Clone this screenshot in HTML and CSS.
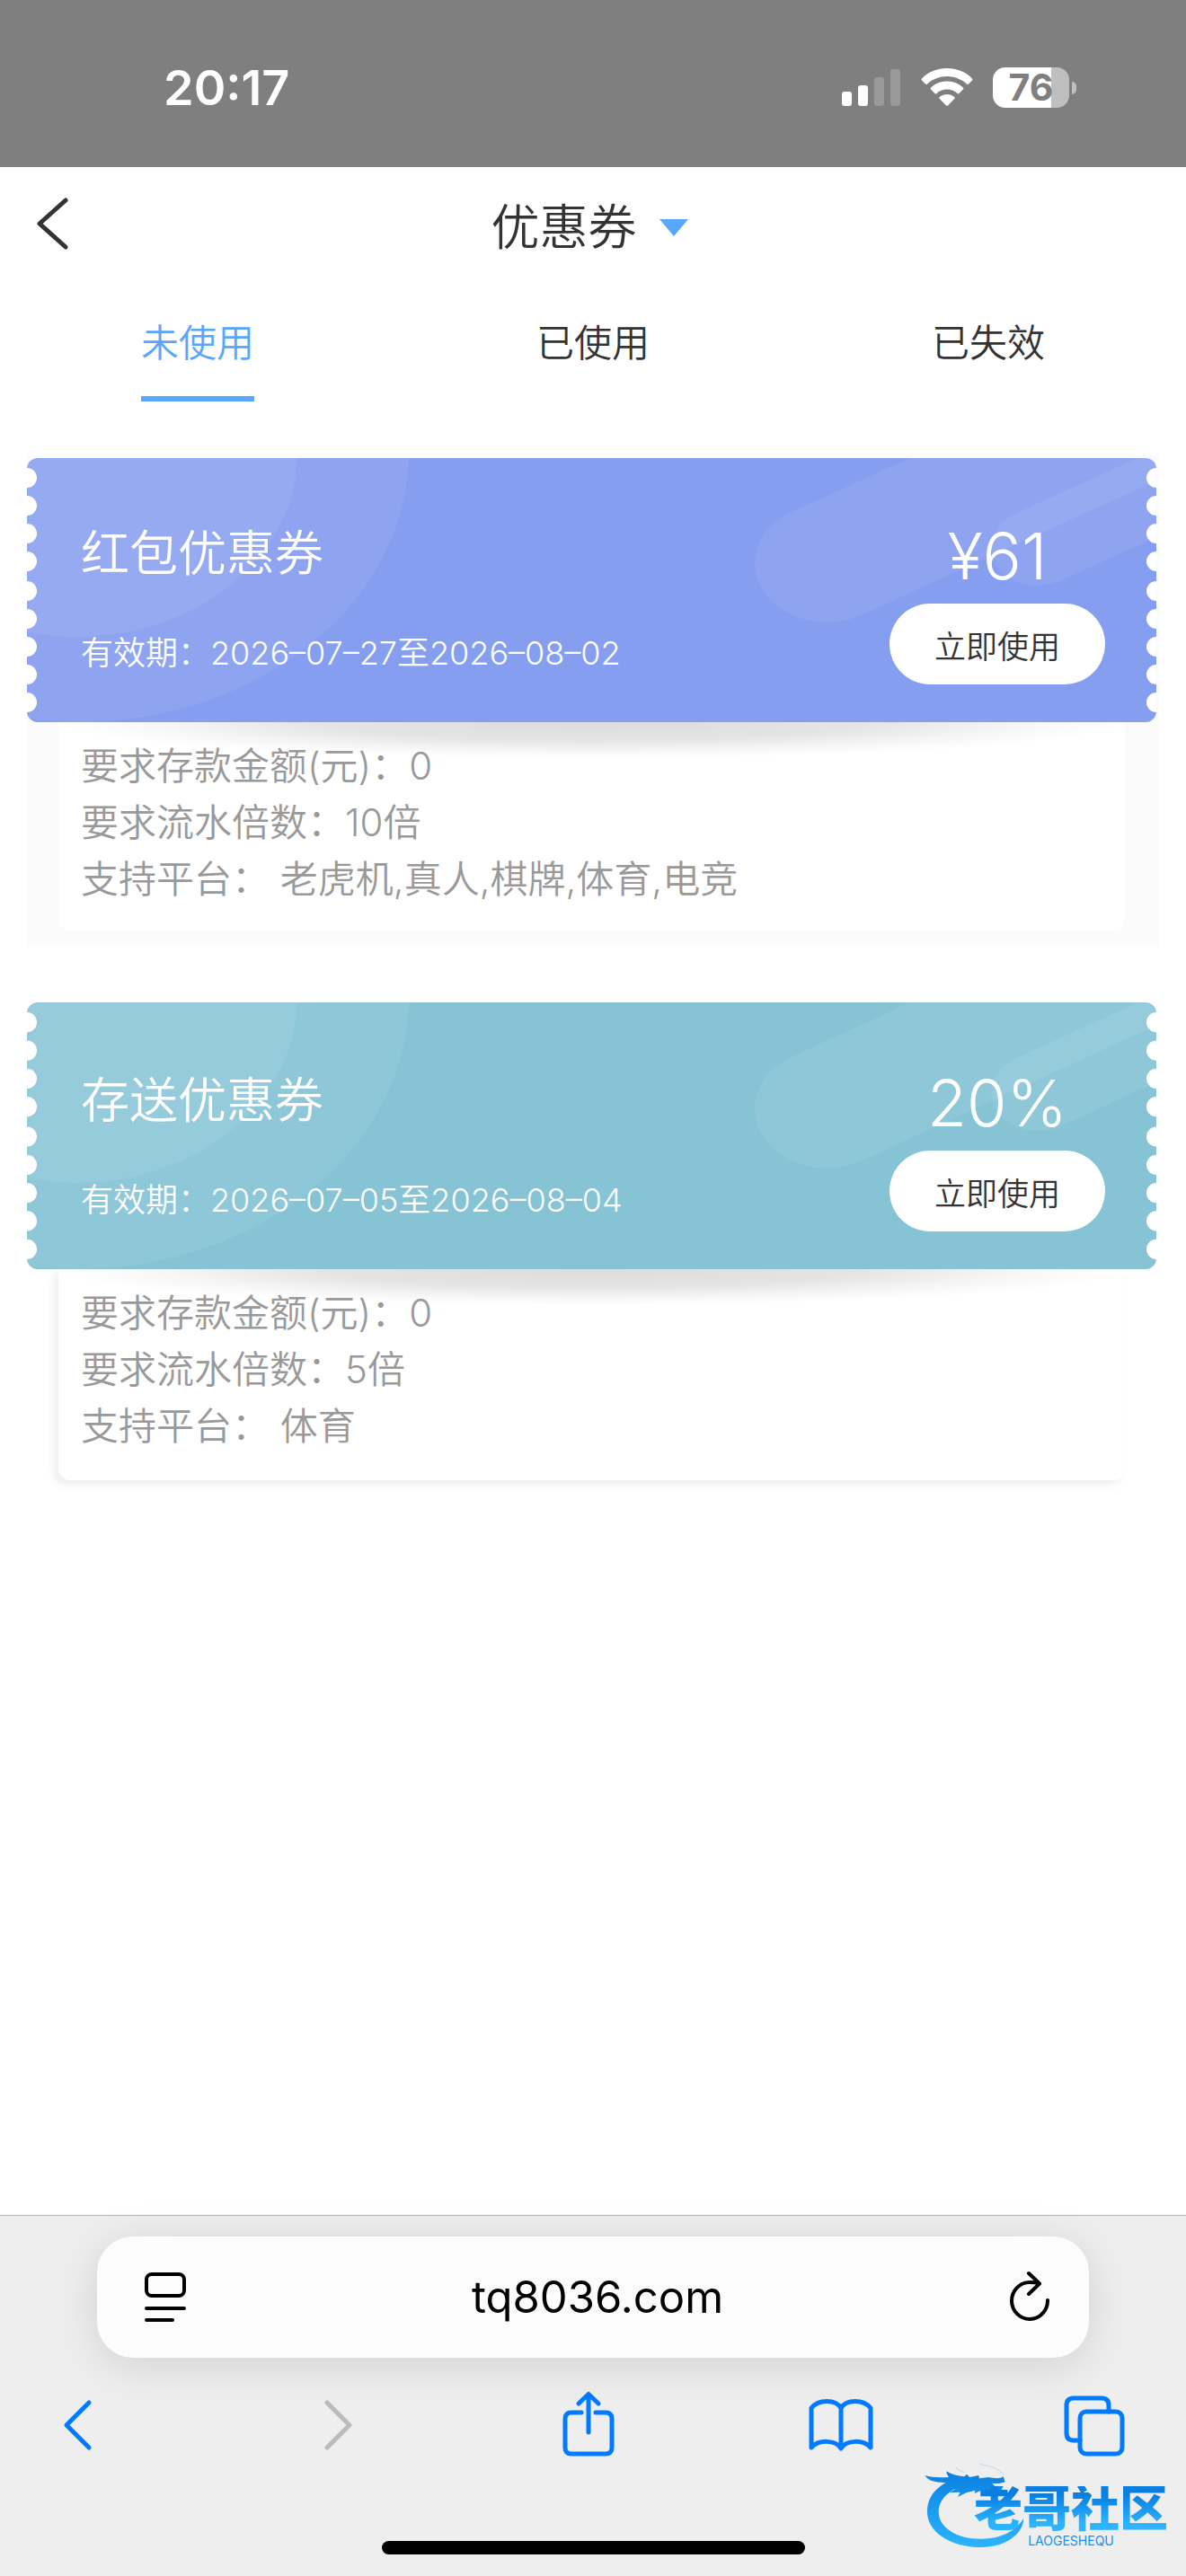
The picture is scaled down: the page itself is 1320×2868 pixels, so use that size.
FILE: index.html
```html
<!doctype html>
<html lang="zh-CN">
<head>
	<meta charset="utf-8">
	<meta name="viewport" content="width=device-width, initial-scale=1">
	<title>优惠券</title>
	<link rel="stylesheet" href="styles.css">
</head>
<body>

<!-- shared ticket background, coloured through currentColor -->
<svg class="defs" width="0" height="0" aria-hidden="true">
	<symbol id="ticket" viewBox="0 0 1257 294" preserveAspectRatio="none">
		<clipPath id="ticket-clip"><rect width="1257" height="294" rx="12"/></clipPath>
		<g clip-path="url(#ticket-clip)">
			<rect width="1257" height="294" fill="currentColor"/>
			<g fill="#fff" fill-opacity=".07">
				<ellipse cx="56" cy="-6" rx="369" ry="300"/>
				<ellipse cx="56" cy="-5" rx="245" ry="204"/>
			</g>
			<g stroke="#fff" stroke-opacity=".07" stroke-linecap="round" transform="scale(1 .82)">
				<path stroke-width="160" d="M890 143l600-333"/>
				<path stroke-width="104" d="M1125 121l400-222"/>
			</g>
			<g class="holes">
				<circle cx="0" cy="22" r="11"/><circle cx="0" cy="53" r="11"/><circle cx="0" cy="84" r="11"/>
				<circle cx="0" cy="115" r="11"/><circle cx="0" cy="148" r="11"/><circle cx="0" cy="179" r="11"/>
				<circle cx="0" cy="210" r="11"/><circle cx="0" cy="241" r="11"/><circle cx="0" cy="272" r="11"/>
				<circle cx="1257" cy="22" r="11"/><circle cx="1257" cy="53" r="11"/><circle cx="1257" cy="84" r="11"/>
				<circle cx="1257" cy="115" r="11"/><circle cx="1257" cy="148" r="11"/><circle cx="1257" cy="179" r="11"/>
				<circle cx="1257" cy="210" r="11"/><circle cx="1257" cy="241" r="11"/><circle cx="1257" cy="272" r="11"/>
			</g>
		</g>
	</symbol>
</svg>

<div class="status-bar">
	<span class="time">20:17</span>
	<div class="status-icons">
		<svg width="65" height="42" viewBox="0 0 65 42" fill="#fff">
			<rect x="0" y="26" width="11" height="16" rx="3"/>
			<rect x="18" y="19" width="11" height="23" rx="3"/>
			<rect x="36" y="10" width="11" height="32" rx="3" fill="#999"/>
			<rect x="54" y="1" width="11" height="41" rx="3" fill="#999"/>
		</svg>
		<svg class="wifi" width="58" height="42" viewBox="0 0 58 42" fill="#fff">
			<path d="M29 0C18 0 8 4 1 11.500q-1 1 0 2l4 4q1 1 2 0C13 12 21 9 29 9s16 3 22 8.500q1 1 2 0l4-4q1-1 0-2C50 4 40 0 29 0z"/>
			<path d="M29 14.500c-7 0-13 2.500-18 7q-1 1 0 2l4.500 4.500q1 1 2 0c3-3 7-4.500 11.500-4.500s8.500 1.500 11.500 4.500q1 1 2 0l4.500-4.500q1-1 0-2c-5-4.500-11-7-18-7z"/>
			<path d="M29 29c-3 0-6 1-8.200 3q-1 1 0 2l7 7.300q1.200 1 2.400 0l7-7.300q1-1 0-2C35 30 32 29 29 29z"/>
		</svg>
		<span class="battery">76</span>
	</div>
</div>

<header class="header">
	<button class="back" aria-label="返回">
		<svg width="38" height="60" viewBox="0 0 38 60" fill="none" stroke="#333" stroke-width="5" stroke-linecap="round" stroke-linejoin="round"><path d="M35 4L6 30l29 26"/></svg>
	</button>
	<button class="title">优惠券<span class="arrow"></span></button>
</header>

<nav class="tabs">
	<a href="#unused" class="active">未使用</a>
	<a href="#used">已使用</a>
	<a href="#expired">已失效</a>
</nav>

<main class="coupons">
	<section class="coupon red-packet">
		<div class="ticket">
			<svg class="ticket-bg"><use href="#ticket"/></svg>
			<div class="ticket-info">
				<h2>红包优惠券</h2>
				<p>有效期：2026–07–27至2026–08–02</p>
			</div>
			<div class="ticket-action">
				<strong>¥61</strong>
				<button>立即使用</button>
			</div>
		</div>
		<div class="rules">
			<p>要求存款金额(元)：0</p>
			<p>要求流水倍数：10倍</p>
			<p>支持平台： 老虎机,真人,棋牌,体育,电竞</p>
		</div>
	</section>

	<section class="coupon deposit">
		<div class="ticket">
			<svg class="ticket-bg"><use href="#ticket"/></svg>
			<div class="ticket-info">
				<h2>存送优惠券</h2>
				<p>有效期：2026–07–05至2026–08–04</p>
			</div>
			<div class="ticket-action">
				<strong>20%</strong>
				<button>立即使用</button>
			</div>
		</div>
		<div class="rules">
			<p>要求存款金额(元)：0</p>
			<p>要求流水倍数：5倍</p>
			<p>支持平台： 体育</p>
		</div>
	</section>
</main>

<footer class="browser">
	<div class="address">
		<button aria-label="页面设置">
			<svg width="46" height="56" viewBox="0 0 46 56" fill="none" stroke="#000" stroke-width="4" stroke-linecap="round"><rect x="2" y="2" width="42" height="24" rx="6"/><path d="M2 40h42M2 53h29"/></svg>
		</button>
		<input type="text" value="tq8036.com" aria-label="网址">
		<button aria-label="刷新">
			<svg width="46" height="62" viewBox="0 0 46 62" fill="none" stroke="#000" stroke-width="4" stroke-linecap="round" stroke-linejoin="round"><path d="M43 34A20 20.500 0 1 1 23 14q6 0 10 1M22 4l12 11.500L22 27"/></svg>
		</button>
	</div>
	<div class="toolbar">
		<button aria-label="后退"><svg width="72" height="72" viewBox="0 0 72 72"><path d="M49 11L24 36l25 25"/></svg></button>
		<button aria-label="前进" disabled><svg width="72" height="72" viewBox="0 0 72 72"><path d="M31 11l25 25-25 25"/></svg></button>
		<button aria-label="分享"><svg width="72" height="72" viewBox="0 0 72 72"><path d="M31 22H20q-7 0-7 7v32q0 7 7 7h38q7 0 7-7V29q0-7-7-7H47M39 44V2M28 12L39 1.500 50 12"/></svg></button>
		<button aria-label="书签"><svg width="72" height="72" viewBox="0 0 72 72"><path d="M38 17C32 7 13 7 5 17v44c8-9 27-9 33 1 6-10 25-10 33-1V17C63 7 44 7 38 17zM38 17v44"/></svg></button>
		<button aria-label="标签页"><svg width="72" height="72" viewBox="0 0 72 72"><rect x="21" y="21" width="47" height="47" rx="7"/><path d="M21 53h-7q-8 0-8-8V14q0-8 8-8h31q8 0 8 8v7"/></svg></button>
	</div>
	<div class="home-indicator"></div>

	<div class="watermark">
		<svg width="140" height="120" viewBox="0 0 420 360" aria-hidden="true">
			<defs>
				<linearGradient id="wm" x1="0" y1="60" x2="0" y2="318" gradientUnits="userSpaceOnUse">
					<stop offset="0" stop-color="#0a7fe0"/>
					<stop offset="1" stop-color="#2cb4ff"/>
				</linearGradient>
			</defs>
			<g fill="url(#wm)">
				<path d="M190 82C100 95 60 145 60 200c0 65 75 118 180 118 80 0 140-43 142-96-27 43-77 68-142 68-85 0-142-40-142-90 0-45 42-85 117-95z"/>
				<path d="M52 78c20 6 45 8 80 6-4-6-8-13-8-20 18 12 38 16 60 18l8-8 10 10 30-6 2 10 30-4c22 4 38 6 50-2l6 18c-14 6-30 6-44 4l10 10 28 0-8 16c-20-2-34-4-46-2l4 10-24-10-22 10 2-10-30 8-28 14 8-16-36 2 20-12-24-20C100 100 66 102 52 78z"/>
			</g>
			<path d="M155 50q10 14 30 18M235 40c30 8 66 12 82 38" fill="none" stroke="#9fcdf0" stroke-width="2"/>
		</svg>
		<div class="watermark-text">
			<b>老哥社区</b>
			<small>LAOGESHEQU</small>
		</div>
	</div>
</footer>

</body>
</html>
```
FILE: styles.css
```css
* {
    box-sizing: border-box;
}

body {
    margin: 0;
    min-height: 100vh;
    display: flex;
    flex-direction: column;
    background: #fff;
    color: #333;
    font-family: Inter, "Noto Sans CJK SC", sans-serif;
    font-size: 42px;
    font-weight: 350;
}

h2, p {
    margin: 0;
    font-weight: inherit;
}

button {
    padding: 0;
    border: none;
    background: none;
    color: inherit;
    font: inherit;
}

svg {
    display: block;
}

.defs {
    position: absolute;
}

/* status bar */

.status-bar {
    display: flex;
    justify-content: space-between;
    align-items: center;
    height: 186px;
    padding: 8px 130px 0 182px;
    background: #7f7f7f;
    color: #fff;
}

.time {
    font-size: 54px;
    font-weight: 600;
}

.status-icons {
    display: flex;
    align-items: center;
}

.wifi {
    margin: 0 22px 0 23px;
}

.battery {
    position: relative;
    width: 85px;
    line-height: 45px;
    border-radius: 14px;
    background: linear-gradient(90deg, #fff 76%, #bfbfbf 76%);
    color: #7f7f7f;
    font-size: 41px;
    font-weight: 700;
    text-align: center;
}

.battery::after {
    content: "";
    position: absolute;
    right: -8px;
    top: 16px;
    width: 5px;
    height: 14px;
    border-radius: 0 7px 7px 0;
    background: #bfbfbf;
}

/* page header */

.header {
    display: grid;
    grid-template-columns: 120px 1fr 128px;
    align-items: center;
    height: 126px;
}

.back {
    padding-left: 38px;
}

.title {
    display: flex;
    justify-content: center;
    align-items: center;
    gap: 25px;
    font-size: 54px;
}

.arrow {
    margin-top: 8px;
    border: 16px solid transparent;
    border-top: 19px solid #58a7fc;
    border-bottom: none;
}

.tabs {
    display: grid;
    grid-template-columns: repeat(3, 1fr);
    justify-items: center;
    height: 135px;
}

.tabs a {
    padding-top: 38px;
    border-bottom: 6px solid transparent;
    color: #333;
    line-height: 63px;
    text-decoration: none;
}

.tabs .active {
    border-color: #58a7fc;
    color: #58a7fc;
}

/* coupons */

.coupons {
    flex: 1;
    display: flex;
    flex-direction: column;
    gap: 63px;
    padding: 60px 30px;
}

.coupon {
    padding-bottom: 17px;
}

.red-packet {
    background: #fbfbfb;
    color: #869ef0;
}

.deposit {
    color: #85c3d5;
}

.holes {
    fill: #fff;
}

.ticket {
    position: relative;
    display: flex;
    justify-content: space-between;
    height: 297px;
    padding: 68px 60px 0;
}

.ticket-bg {
    position: absolute;
    inset: 0;
    width: calc(100% - 3px);
    height: 100%;
}

.red-packet .ticket-bg {
    top: 3px;
    height: calc(100% - 3px);
}

.ticket-info,
.ticket-action {
    position: relative;
    color: #fff;
}

.ticket-info h2 {
    font-size: 54px;
    line-height: 84px;
}

.ticket-info p {
    margin-top: 41px;
    font-size: 36px;
    line-height: 54px;
}

.ticket-action {
    width: 240px;
    text-align: center;
}

.ticket-action strong {
    display: block;
    margin-bottom: 10px;
    font-size: 72px;
    font-weight: 350;
    line-height: 87px;
}

.ticket-action button {
    width: 100%;
    height: 90px;
    border-radius: 45px;
    background: #fff;
    color: #333;
    font-size: 35px;
}

.rules {
    margin: 0 38px 0 35px;
    padding: 17px 25px 26px;
    border-radius: 0 0 12px 12px;
    background: radial-gradient(ellipse 50% 40px at 50% 0, #dcdcdc, #e4e4e4 50%, #f6f6f6 80%, #fff) #fff;
    color: #999;
    line-height: 63px;
}

.deposit .rules {
    padding-bottom: 29px;
    box-shadow: -5px 5px 10px rgba(0, 0, 0, .07);
}

/* browser chrome */

.browser {
    position: relative;
    border-top: 1px solid #b3b3b3;
    padding: 23px 0 24px;
    background: #eee;
}

.address {
    display: flex;
    align-items: center;
    height: 135px;
    margin: 0 108px;
    padding: 0 43px 0 53px;
    border-radius: 40px;
    background: #fcfcfc;
    box-shadow: 0 8px 50px rgba(0, 0, 0, .12);
}

.address input {
    flex: 1;
    min-width: 0;
    border: none;
    background: none;
    color: #000;
    font: 400 49px Inter, sans-serif;
    text-align: center;
}

.toolbar {
    display: flex;
    justify-content: space-between;
    margin: 39px 67px 0 50px;
}

.toolbar svg {
    overflow: visible;
    fill: none;
    stroke: #007aff;
    stroke-width: 5;
    stroke-linecap: round;
    stroke-linejoin: round;
}

.toolbar button:disabled svg {
    stroke: #bbb;
}

.home-indicator {
    width: 471px;
    height: 15px;
    margin: 93px auto 0;
    border-radius: 8px;
    background: #000;
}

.watermark {
    position: absolute;
    right: 20px;
    bottom: 18px;
    display: flex;
}

.watermark-text {
    display: flex;
    flex-direction: column;
    gap: 2px;
    margin: 38px 0 0 -68px;
    color: #1690e8;
}

.watermark b {
    background: linear-gradient(#0a7fe0 20%, #2cb4ff 80%);
    background-clip: text;
    color: transparent;
    font-size: 54px;
    font-weight: 900;
    line-height: 52px;
}

.watermark small {
    align-self: center;
    font-size: 14px;
    font-weight: 400;
    line-height: 14px;
}
```
